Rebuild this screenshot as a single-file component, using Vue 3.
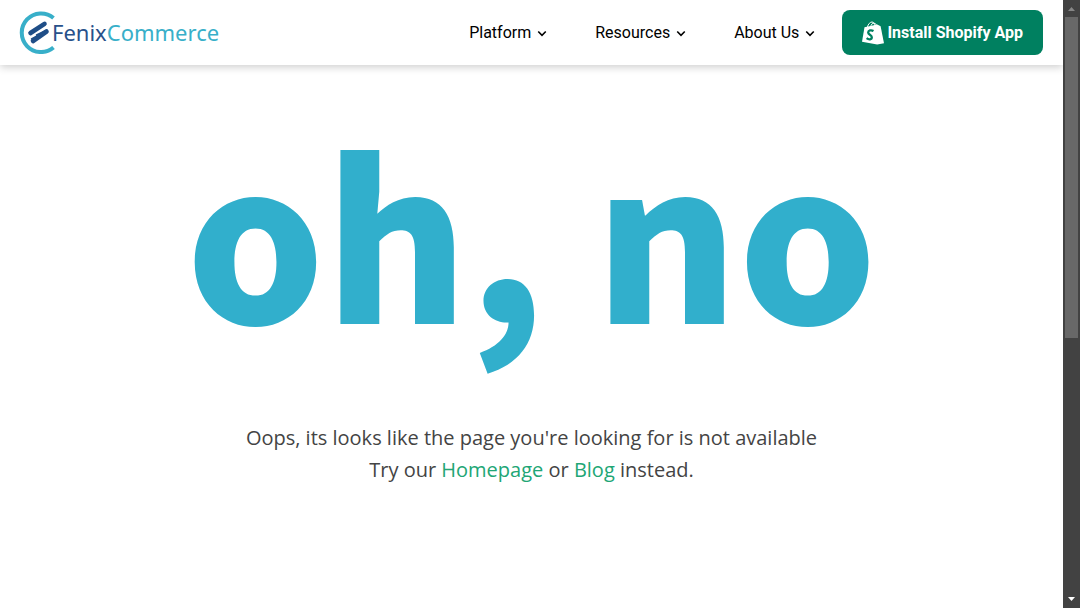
<script setup>
const menu = ['Platform', 'Resources', 'About Us']
</script>

<template>
  <div class="window">
    <div class="page">
      <header class="bar">
        <a class="logo" href="#" aria-label="FenixCommerce">
          <svg class="mark" viewBox="0 0 40 44" aria-hidden="true">
            <path d="M35.500 8A19.300 19.300 0 1 0 35.500 37.500" fill="none" stroke="#38afc9" stroke-width="4" />
            <g stroke="#1f4e87" stroke-width="4.600" stroke-linecap="round">
              <path d="M12.500 23L26.500 13.800M15 31L28.500 21.500" />
            </g>
            <path d="M18.500 25L28.500 20.300M13.500 29L21 25" stroke="#1f4e87" stroke-width="1.500" stroke-linecap="round" />
          </svg>
          <span class="fenix">Fenix</span><span class="commerce">Commerce</span>
        </a>
        <nav class="menu">
          <button v-for="item in menu" :key="item" class="item" type="button">
            {{ item }}
            <svg class="chevron" viewBox="0 0 8 6" aria-hidden="true">
              <path d="M1 1l3 3 3-3" fill="none" stroke="currentColor" stroke-width="1.300" />
            </svg>
          </button>
        </nav>
        <a class="install" href="#">
          <svg class="bag" viewBox="0 0 22 24" aria-hidden="true">
            <path d="M2.500 6.300L15.200 3.600L18.600 5.200L22 22.200L15.200 23.600L0 20.800Z" fill="#fff" />
            <path d="M5.300 6.500C6 3 8.200 1 10 1C12 1 12.800 3 12.800 5M8.600 6C9 3.500 10.500 2 12 2.200C13.500 2.300 14.500 3.500 14.700 5" fill="none" stroke="#fff" stroke-width="1" />
            <path d="M11.500 10C9 8.600 6.200 9.500 6.200 11.500C6.200 13.700 9.800 13.800 9.800 16.300C9.800 18.600 7 19 4.600 17.200" fill="none" stroke="#008060" stroke-width="2.300" />
          </svg>
          Install Shopify App
        </a>
      </header>
      <main class="content">
        <h1 class="title">oh, no</h1>
        <p class="message">
          Oops, its looks like the page you're looking for is not available<br />
          Try our <a href="#">Homepage</a> or <a href="#">Blog</a> instead.
        </p>
      </main>
    </div>
    <div class="scrollbar" aria-hidden="true">
      <svg class="arrow" viewBox="0 0 17 17"><path d="M5 11L8.500 7L12 11Z" fill="#868686" /></svg>
      <div class="track"><div class="thumb"></div></div>
      <svg class="arrow" viewBox="0 0 17 17"><path d="M5 6L8.500 10L12 6Z" fill="#fff" /></svg>
    </div>
  </div>
</template>

<style>
body {
  margin: 0;
  background: #fff;
}
</style>

<style scoped>
.window {
  display: flex;
  height: 100vh;
  overflow: hidden;
}
.page {
  flex: 1;
  min-width: 0;
}
.bar {
  display: flex;
  align-items: center;
  box-sizing: border-box;
  height: 65px;
  padding: 0 20px 0 18px;
  background: #fff;
  box-shadow: 0 2px 8px rgba(0, 0, 0, 0.2);
  font-family: Roboto, "Liberation Sans", sans-serif;
  font-size: 16px;
}
.logo {
  display: flex;
  align-items: center;
  padding-bottom: 2px;
  font-family: "Noto Sans", "Open Sans", sans-serif;
  font-size: 22px;
  line-height: 32px;
  text-decoration: none;
}
.mark {
  width: 40px;
  height: 44px;
  margin-right: -6px;
}
.fenix {
  color: #28518a;
}
.commerce {
  color: #38afc9;
}
.menu {
  display: flex;
  gap: 48px;
  margin-left: auto;
}
.item {
  display: flex;
  align-items: center;
  gap: 6px;
  padding: 0;
  border: 0;
  background: none;
  color: #000;
  font: inherit;
  white-space: nowrap;
}
.chevron {
  width: 10px;
  height: 8px;
  margin-top: 3px;
}
.install {
  display: flex;
  align-items: center;
  gap: 3px;
  height: 45px;
  margin-left: 27px;
  padding: 0 20px;
  border-radius: 8px;
  background: #008060;
  color: #fff;
  font-weight: 700;
  text-decoration: none;
  white-space: nowrap;
}
.bag {
  width: 22px;
  height: 24px;
}
.content {
  padding-top: 14px;
  text-align: center;
}
.title {
  margin: 0 0 43px;
  color: #31afcc;
  font-family: "Noto Sans CJK SC", sans-serif;
  font-size: 218px;
  font-weight: 900;
  line-height: 300px;
}
.message {
  margin: 0;
  color: #444;
  font-family: "Open Sans", sans-serif;
  font-size: 20px;
  line-height: 32px;
}
.message a {
  color: #21a675;
  text-decoration: none;
}
.scrollbar {
  display: flex;
  flex-direction: column;
  width: 17px;
  background: #424242;
}
.arrow {
  width: 17px;
  height: 17px;
}
.track {
  flex: 1;
}
.thumb {
  height: 56%;
  margin: 0 2px;
  background: #686868;
}
</style>
